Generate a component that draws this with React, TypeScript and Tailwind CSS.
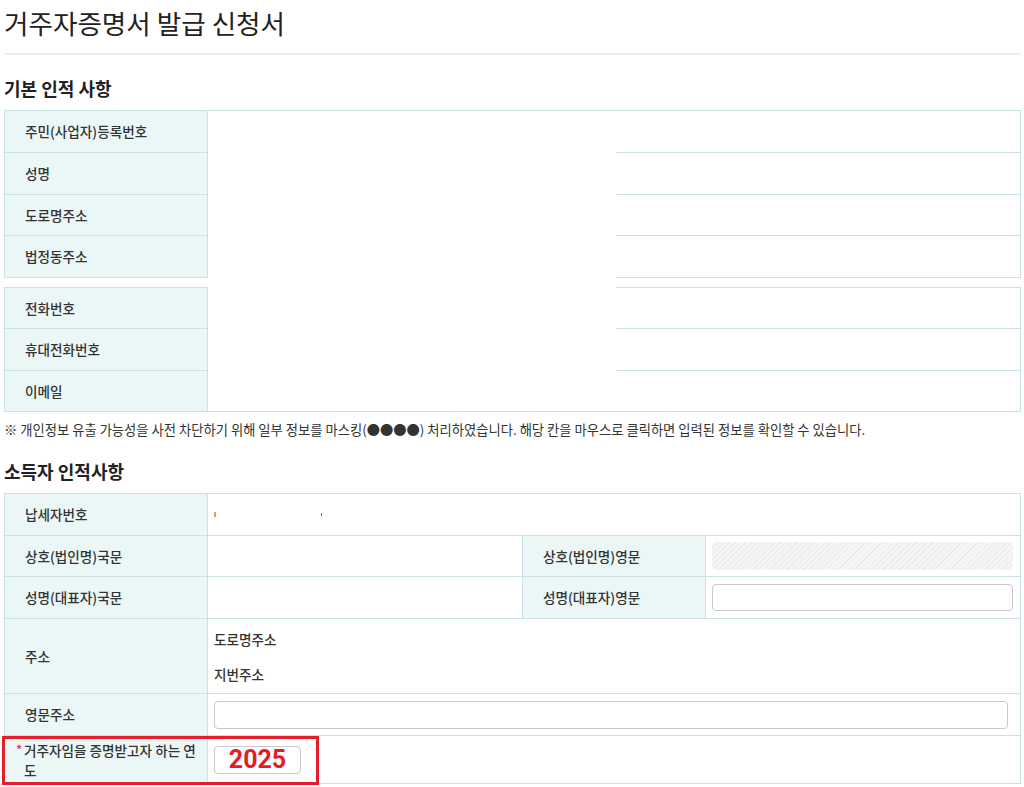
import React from 'react'

const font = { fontFamily: '"Noto Sans CJK KR", "Noto Sans", sans-serif' }

const cell = 'border border-[#cbe2e5] align-middle text-left text-[13.6px] font-medium text-[#333]'
const th = `${cell} bg-[#ebf7f6] pl-[20px]`
const td = `${cell} bg-white pl-[6px]`

function Row({ label, h }: { label: string; h: string }) {
  return (
    <tr className={h}>
      <th className={th}>{label}</th>
      <td className={td}></td>
    </tr>
  )
}

export default function App() {
  return (
    <div style={font} className="min-h-[787px] bg-white pl-[4px] pr-[3px] text-[#333]">
      <h1 className="pt-[4px] text-[26.6px] leading-[38px] font-normal text-[#222]">거주자증명서 발급 신청서</h1>
      <div className="mt-[11px] h-[2px] bg-[#eeeeee]" />

      <h2 className="mt-[20px] text-[18px] leading-[26px] font-semibold text-[#222]">기본 인적 사항</h2>

      {/* masked block: values and inner rules are whited out */}
      <div className="relative mt-[9px]">
        <table className="w-full table-fixed border-collapse">
          <colgroup>
            <col className="w-[203px]" />
            <col />
          </colgroup>
          <tbody>
            <Row label="주민(사업자)등록번호" h="h-[42px]" />
            <Row label="성명" h="h-[42px]" />
            <Row label="도로명주소" h="h-[41px]" />
            <Row label="법정동주소" h="h-[42px]" />
          </tbody>
        </table>
        <table className="mt-[9px] w-full table-fixed border-collapse">
          <colgroup>
            <col className="w-[203px]" />
            <col />
          </colgroup>
          <tbody>
            <Row label="전화번호" h="h-[41px]" />
            <Row label="휴대전화번호" h="h-[42px]" />
            <Row label="이메일" h="h-[41px]" />
          </tbody>
        </table>
        <div className="absolute left-[204px] top-[1px] h-[298px] w-[408px] bg-white" />
      </div>

      <p className="mt-[9px] text-[13.3px] leading-[18px] text-[#333]">
        ※ 개인정보 유출 가능성을 사전 차단하기 위해 일부 정보를 마스킹(●●●●) 처리하였습니다. 해당 칸을 마우스로 클릭하면 입력된 정보를 확인할 수 있습니다.
      </p>

      <h2 className="mt-[19px] text-[18px] leading-[26px] font-semibold text-[#222]">소득자 인적사항</h2>

      <div className="relative mt-[9px]">
        <table className="w-full table-fixed border-collapse">
          <colgroup>
            <col className="w-[203px]" />
            <col className="w-[315px]" />
            <col className="w-[183px]" />
            <col />
          </colgroup>
          <tbody>
            <tr className="h-[42px]">
              <th className={th}>납세자번호</th>
              <td className={td} colSpan={3}>
                <div className="flex items-center">
                  <span className="inline-block h-[5px] w-[2px] bg-[#e0a060]" />
                  <span className="ml-[105px] inline-block h-[3px] w-[1px] bg-[#4a7fd0]" />
                </div>
              </td>
            </tr>
            <tr className="h-[41px]">
              <th className={th}>상호(법인명)국문</th>
              <td className={td}></td>
              <th className={th}>상호(법인명)영문</th>
              <td className={`${td} pr-[7px]`}>
                <div className="h-[28px] w-full rounded-[4px] bg-[repeating-linear-gradient(135deg,#ebebeb_0px,#ebebeb_1px,#f5f5f5_1px,#f5f5f5_4px)]" />
              </td>
            </tr>
            <tr className="h-[42px]">
              <th className={th}>성명(대표자)국문</th>
              <td className={td}></td>
              <th className={th}>성명(대표자)영문</th>
              <td className={`${td} pr-[7px]`}>
                <input className="block h-[27px] w-full rounded-[4px] border border-[#c8c8c8] bg-white" />
              </td>
            </tr>
            <tr className="h-[75px]">
              <th className={th}>주소</th>
              <td className={td} colSpan={3}>
                <div className="leading-[18px]">도로명주소</div>
                <div className="mt-[17px] leading-[18px]">지번주소</div>
              </td>
            </tr>
            <tr className="h-[42px]">
              <th className={th}>영문주소</th>
              <td className={td} colSpan={3}>
                <input className="block h-[28px] w-[794px] rounded-[4px] border border-[#c8c8c8] bg-white" />
              </td>
            </tr>
            <tr className="h-[48px]">
              <th className={`${cell} bg-[#ebf7f6] pl-[11px]`}>
                <div className="flex leading-[20px]">
                  <span className="w-[8px] shrink-0 text-[13px] text-[#e0306a]">*</span>
                  <span>
                    거주자임을 증명받고자 하는 연<br />도
                  </span>
                </div>
              </th>
              <td className={td} colSpan={3}>
                <div className="flex h-[28px] w-[87px] items-center justify-center rounded-[4px] border border-[#c8c8c8] bg-white">
                  <span className="text-[25px] leading-none font-bold text-[#e31b23]" style={{ fontFamily: 'Roboto, "Liberation Sans", sans-serif' }}>
                    2025
                  </span>
                </div>
              </td>
            </tr>
          </tbody>
        </table>
        <div className="pointer-events-none absolute left-[-2px] top-[243px] h-[49px] w-[317px] border-[3px] border-[#e41e2b]" />
      </div>
    </div>
  )
}
